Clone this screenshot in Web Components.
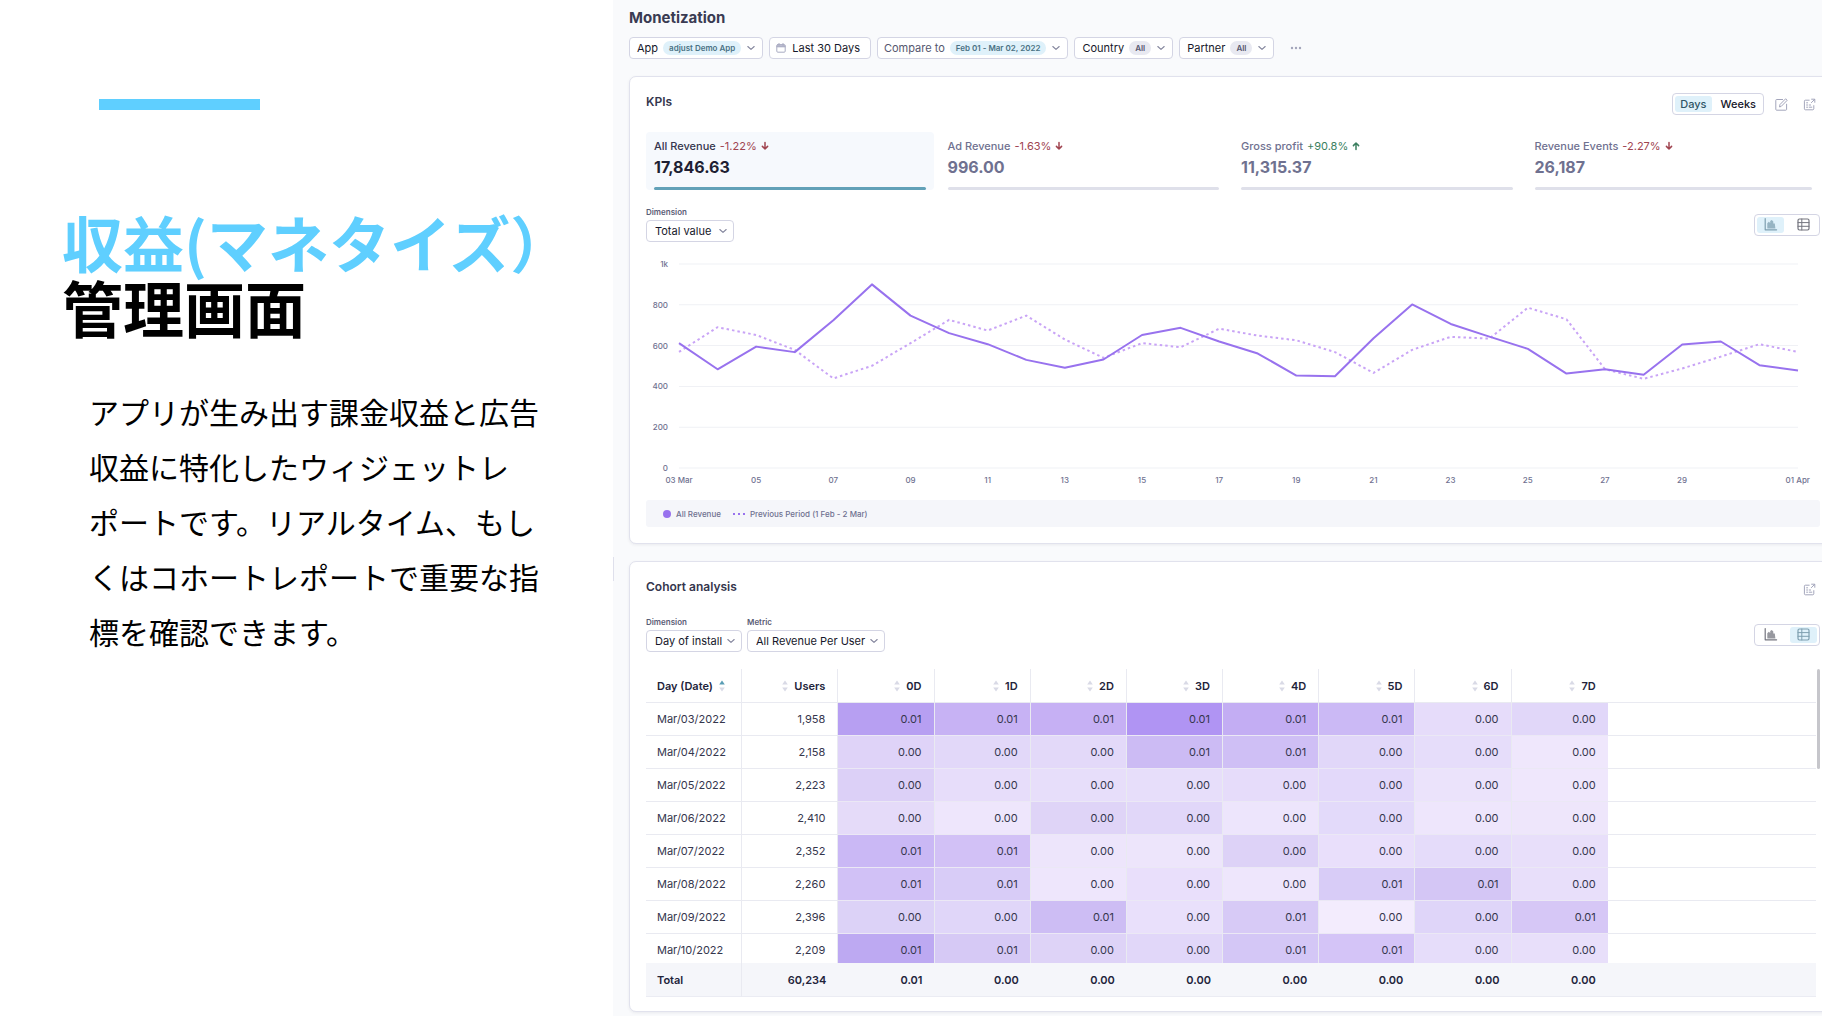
<!DOCTYPE html>
<html lang="ja">
<head>
<meta charset="utf-8">
<title>Monetization</title>
<style>
  body { margin: 0; background: #fff; font-family: Inter, "Noto Sans CJK JP", sans-serif; }
</style>
</head>
<body>
<monetization-page></monetization-page>

<script>
const define = (name, html, setup) => customElements.define(name, class extends HTMLElement {
  constructor() { super(); this.attachShadow({ mode: 'open' }); }
  connectedCallback() {
    this.shadowRoot.innerHTML = '<style>*{box-sizing:border-box}button,select{font:inherit;color:inherit;margin:0}</style>' +
      (typeof html === 'function' ? html(this) : html);
    if (setup) setup(this, this.shadowRoot);
  }
});

/* Icons ------------------------------------------------------------ */
const icons = {
  chevron: ['8', '0 0 8 8', '<path d="M.8 2.5 4 5.4 7.2 2.5" stroke-width="1.1"/>'],
  calendar: ['10', '0 0 10 10', '<rect x=".8" y="1.6" width="8.4" height="7.6" rx="1"/><path d="M1 3.8h8M3 .4v2M7 .4v2" /><path d="M1.2 3h7.6" stroke-width="1.4"/>'],
  edit: ['13', '0 0 13 13', '<path d="M7.6 1.5H1.6a.8.8 0 0 0-.8.8v9.1c0 .5.3.8.8.8h9.2c.4 0 .8-.3.8-.8V6.2"/><path d="M4.6 8.6 5 6.5 10.6.8l1.6 1.5-5.7 5.8z"/>'],
  share: ['13', '0 0 13 13', '<path d="M6.2 2.2H2.4a1 1 0 0 0-1 1v7.6c0 .6.4 1 1 1h7.4c.5 0 1-.4 1-1V7.6"/><path d="M8.6 1.2h3.2v3.1M11.6 1.4 8.4 4.6M3.6 4.8h1M3.6 7h1M3.6 9.2h1M6.2 9.2h2.6M6.2 7h1.4"/>'],
  chart: ['13', '0 0 13 13', '<path d="M1.2 .6v11.2h11.4" stroke-width="1.2"/><path d="M3.3 10.4V5.2l1.5-1.4 1.4 1.2V3l1.6-1 1.5 1.6v2h1.5l.6 4.8z" fill="currentColor" stroke="none" opacity=".75"/>'],
  table: ['13', '0 0 13 13', '<rect x="1" y="1" width="11" height="11" rx="1.4" stroke-width="1.2"/><path d="M4.8 1v11M1 4.6h11M1 8.3h11"/>'],
  down: ['8', '0 0 8 8', '<path d="M4 .6v6M1.4 4.4 4 7l2.6-2.6" stroke-width="1.5"/>'],
  up: ['8', '0 0 8 8', '<path d="M4 7.4v-6M1.4 3.6 4 1l2.6 2.6" stroke-width="1.5"/>'],
  dots: ['12', '0 0 12 12', '<g fill="currentColor" stroke="none"><circle cx="2" cy="6" r="1.2"/><circle cx="6" cy="6" r="1.2"/><circle cx="10" cy="6" r="1.2"/></g>'],
  sort: ['12', '0 0 6 12', '<path d="M3 .4 5.8 4.6H.2z" fill="var(--sort-up,#d9dae6)" stroke="none"/><path d="M3 11.6 5.8 7.4H.2z" fill="#d9dae6" stroke="none"/>']
};
define('ui-icon', el => {
  const [h, box, body] = icons[el.getAttribute('name')];
  return `<style>:host{display:inline-flex;flex:none}svg{display:block;height:${h}px;overflow:visible}</style>
  <svg viewBox="${box}" fill="none" stroke="currentColor" stroke-width="1" stroke-linecap="round" stroke-linejoin="round" aria-hidden="true">${body}</svg>`;
});

/* Introductory text beside the dashboard ---------------------------- */
define('slide-intro', `
<style>
  :host { display: block; padding: 99px 40px 40px 62px; color: #000; font-family: "Noto Sans CJK JP", sans-serif; }
  .rule { width: 161px; height: 11px; margin-left: 37px; background: #5fcfff; }
  h1 { margin: 99px 0 0; font-size: 61px; line-height: 65px; font-weight: 700; white-space: nowrap; }
  h1 span { color: #5fcfff; }
  p { margin: 45px 0 0 27px; font-size: 30px; line-height: 55px; white-space: nowrap; }
</style>
<div class="rule"></div>
<h1><span>収益(マネタイズ）</span><br>管理画面</h1>
<p>アプリが生み出す課金収益と広告<br>収益に特化したウィジェットレ<br>ポートです。リアルタイム、もし<br>くはコホートレポートで重要な指<br>標を確認できます。</p>`);

/* Filter button ------------------------------------------------------ */
define('filter-chip', el => `
<style>
  :host { display: block; }
  button { display: flex; align-items: center; height: 22px; padding: 0 7px; border: 1px solid #d4d5e4; border-radius: 4px;
    background: #fff; color: #16172a; font-size: 11px; line-height: 14px; font-weight: 400; white-space: nowrap; }
  :host([muted]) button { color: #55576f; padding: 0 7px 0 6px; }
  :host([plain]) button { padding: 0 10px 0 6px; }
  .pill { margin: 0 6px 0 5px; padding: 0 6px; border-radius: 7px; background: #dff1fa; color: #4a7184; font-size: 8px; line-height: 14px; font-weight: 600; }
  .pill.all { background: #e8e9f1; color: #55576f; }
  .chev { color: #82849c; }
  .cal { color: #a9abc2; margin-right: 6px; }
</style>
<button type="button">
  ${el.hasAttribute('plain') ? '<ui-icon class="cal" name="calendar"></ui-icon>' : ''}
  <slot></slot>
  ${el.hasAttribute('value') ? `<span class="pill ${el.getAttribute('value') === 'All' ? 'all' : ''}">${el.getAttribute('value')}</span><ui-icon class="chev" name="chevron"></ui-icon>` : ''}
</button>`);

/* Card -------------------------------------------------------------- */
define('dash-card', el => `
<style>
  :host { display: block; }
  section { display: flex; flex-direction: column; gap: 17px; padding: 16px 16px var(--card-bottom, 16px); background: #fff;
    border: 1px solid #e1e2ed; border-radius: 7px; box-shadow: 0 1px 3px #2f305014; }
  header { display: flex; justify-content: space-between; align-items: flex-start; height: 22px; }
  h2 { margin: 0; color: #35364d; font-size: 12px; line-height: 18px; font-weight: 600; }
  .tools { display: flex; align-items: center; gap: 11px; height: 22px; padding-right: 4px; }
</style>
<section><header><h2>${el.getAttribute('heading')}</h2><div class="tools"><slot name="tools"></slot></div></header><slot></slot></section>`);

define('icon-button', el => `
<style>:host{display:block}button{display:flex;padding:0;border:0;background:none;color:#a3a5bb}</style>
<button type="button" aria-label="${el.getAttribute('label')}"><ui-icon name="${el.getAttribute('icon')}"></ui-icon></button>`);

/* Two-way switch ------------------------------------------------------ */
define('view-toggle', el => {
  const on = el.getAttribute('active');
  const item = (key, body, label) => `<button type="button" aria-pressed="${on === key}" ${label ? `aria-label="${label}"` : ''}>${body}</button>`;
  return `
<style>
  :host { display: block; }
  div { display: flex; gap: 4px; height: 22px; padding: 2px; border: 1px solid #d4d5e4; border-radius: 4px; background: #fff; }
  button { display: flex; align-items: center; justify-content: center; padding: 0 5px; border: 0; border-radius: 3px; background: none;
    color: #16172a; font-size: 11px; line-height: 14px; font-weight: 500; }
  :host([icons]) button { width: 27px; padding: 0; color: #74757f; }
  :host([icons]) div { gap: 6px; }
  button[aria-pressed=true] { background: #dff1fa; color: #2f5566; }
  :host([icons]) button[aria-pressed=true] { color: #7e9fb0; }
</style>
<div role="group">${el.hasAttribute('icons')
    ? item('chart', '<ui-icon name="chart"></ui-icon>', 'Chart') + item('table', '<ui-icon name="table"></ui-icon>', 'Table')
    : item('days', 'Days') + item('weeks', 'Weeks')}</div>`;
});

/* KPI tile ------------------------------------------------------------ */
define('kpi-tile', el => {
  const up = el.getAttribute('change').startsWith('+');
  return `
<style>
  :host { display: block; flex: 1; }
  article { display: flex; flex-direction: column; height: 58px; margin-right: 6px; padding: 7px 8px 0; border-radius: 4px; color: #6f7190; }
  :host(:last-child) article { margin-right: 0; }
  .top { display: flex; align-items: center; gap: 4px; font-size: 11px; line-height: 14px; font-weight: 500; }
  .change { display: flex; align-items: center; gap: 4px; color: ${up ? '#3b7f5f' : '#a04450'}; font-weight: 400; }
  strong { margin-top: 5px; font-size: 16px; line-height: 18px; font-weight: 700; }
  .bar { height: 3px; margin-top: auto; border-radius: 2px; background: #dfe0ea; }
  :host([active]) article { background: #f6f9fd; color: #1e1f33; }
  :host([active]) .top { color: #35364d; }
  :host([active]) .bar { background: #62a1b8; }
</style>
<article>
  <div class="top"><span>${el.getAttribute('name')}</span><span class="change">${el.getAttribute('change')}<ui-icon name="${up ? 'up' : 'down'}"></ui-icon></span></div>
  <strong>${el.getAttribute('value')}</strong><div class="bar"></div>
</article>`;
});

/* Labelled drop-down ---------------------------------------------------- */
define('field-select', el => `
<style>
  :host { display: block; }
  label { display: block; margin-bottom: 3px; color: #5b5d76; font-size: 8px; line-height: 10px; font-weight: 600; }
  .box { display: grid; align-items: center; }
  .box > * { grid-area: 1 / 1; }
  select { appearance: none; height: 22px; min-width: 88px; padding: 0 18px 0 8px; border: 1px solid #d4d5e4; border-radius: 4px;
    background: #fff; color: #16172a; font-size: 11px; line-height: 14px; }
  ui-icon { justify-self: end; margin-right: 7px; color: #82849c; pointer-events: none; }
</style>
<label for="s">${el.getAttribute('label')}</label>
<div class="box"><select id="s"><option>${el.getAttribute('value')}</option></select><ui-icon name="chevron"></ui-icon></div>`);

define('control-row', `
<style>:host{display:flex;align-items:center;justify-content:space-between}div{display:flex;gap:5px}</style>
<div><slot></slot></div><slot name="end"></slot>`);

/* Line chart ------------------------------------------------------------ */
const revenue = [612,484,595,568,724,900,747,661,607,530,491,532,652,687,620,561,453,450,636,802,706,644,584,463,484,457,605,620,504,478];
const previous = [569,690,652,579,439,501,612,726,674,747,630,540,612,592,683,649,626,568,466,579,643,634,786,729,484,437,488,546,607,569];
const points = list => list.map((v, i) => `${i},${1000 - v}`).join(' ');
const dayLabel = i => i === 0 ? '03 Mar' : i === 29 ? '01 Apr' : i % 2 || i > 26 ? '' : String(i + 3).padStart(2, '0');
define('line-chart', `
<style>
  :host { display: block; margin-top: 5px; color: #6f7190; font-size: 8px; line-height: 10px; font-weight: 500; }
  .plot { display: grid; grid-template-columns: 22px 1fr; column-gap: 11px; padding-right: 22px; }
  .y { display: flex; flex-direction: column; justify-content: space-between; margin: -5px 0; text-align: right; }
  svg { display: block; width: 100%; height: 204px; overflow: visible; }
  svg * { vector-effect: non-scaling-stroke; fill: none; }
  .grid { stroke: #f0f1f5; stroke-width: 1; }
  .now { stroke: #9872ee; stroke-width: 2; stroke-linejoin: round; }
  .before { stroke: #c9a4f6; stroke-width: 2; stroke-dasharray: 2.5 3; }
  .x { grid-column: 2; display: flex; justify-content: space-between; margin-top: 7px; height: 10px; }
  .x span { display: flex; justify-content: center; width: 0; white-space: nowrap; }
  .legend { display: flex; align-items: center; gap: 12px; height: 27px; margin-top: 15px; padding: 0 17px; border-radius: 3px; background: #f5f6fa; }
  .legend span { display: flex; align-items: center; gap: 5px; }
  .dot { width: 8px; height: 8px; border-radius: 50%; background: #9872ee; }
  .dash { width: 12px; height: 2px; background: repeating-linear-gradient(90deg, #9872ee 0 2px, transparent 2px 5px); }
</style>
<div class="plot">
  <div class="y"><span>1k</span><span>800</span><span>600</span><span>400</span><span>200</span><span>0</span></div>
  <svg viewBox="0 0 29 1000" preserveAspectRatio="none" role="img" aria-label="All Revenue">
    <path class="grid" d="M0 0H29M0 200H29M0 400H29M0 600H29M0 800H29M0 1000H29"/>
    <polyline class="before" points="${points(previous)}"/>
    <polyline class="now" points="${points(revenue)}"/>
  </svg>
  <div class="x">${revenue.map((_, i) => `<span>${dayLabel(i)}</span>`).join('')}</div>
</div>
<div class="legend"><span><i class="dot"></i>All Revenue</span><span><i class="dash"></i>Previous Period (1 Feb - 2 Mar)</span></div>`);

/* Cohort table ------------------------------------------------------------ */
const cohorts = [
  ['Mar/03/2022', '1,958', '11111100', 'b79ff2 c7b2f4 c6b0f4 b094f3 c3adf3 cbb9f5 e6dcfa e1d7f9'],
  ['Mar/04/2022', '2,158', '00011000', 'dfd3f8 e2d8f9 e3d9f9 ccbbf4 cfbff5 e1d7f9 e6ddfa efe7fc'],
  ['Mar/05/2022', '2,223', '00000000', 'dcd0f7 e7ddfa e7defa e7defa e6dcfa e3d9fa ebe3fb efe7fc'],
  ['Mar/06/2022', '2,410', '00000000', 'e5dbf9 eee6fc dfd4f7 e1d7f9 ede5fc e3dafa eee6fc eee6fb'],
  ['Mar/07/2022', '2,352', '11000000', 'cab8f5 d2c1f6 ede5fb ede5fb ddd2f7 e9dffb e5dcfa e8dffa'],
  ['Mar/08/2022', '2,260', '11000110', 'd1c1f6 d8ccf7 eee6fc e9dffb eee6fc d8ccf7 d4c6f5 e8dffa'],
  ['Mar/09/2022', '2,396', '00101001', 'dcd2f7 e0d6f9 cdbdf4 e9e0fb d7caf6 f3ecfd dfd5f9 d6c7f6'],
  ['Mar/10/2022', '2,209', '11001100', 'bda9f2 d6c9f5 ded3f7 e1d7f9 d4c7f6 d4c4f7 e6ddfa e8dffa']
];
define('cohort-table', `
<style>
  :host { display: flex; align-items: flex-start; gap: 1px; height: 328px; }
  .scroll { flex: 1; height: 328px; overflow: hidden; }
  table { width: 100%; table-layout: fixed; border-collapse: separate; border-spacing: 0; color: #35364d; font-size: 11px; line-height: 14px; }
  col { width: 8.22%; } col.rest { width: auto; }
  th, td { height: 33px; padding: 0 12px 0 11px; border-bottom: 1px solid #e9eaf1; text-align: right; font-weight: 400; white-space: nowrap; }
  th:first-child, td:first-child { text-align: left; }
  thead th, tfoot th, tfoot td { font-weight: 600; color: #22233a; }
  thead th { height: 34px; }
  th div { display: flex; align-items: center; justify-content: flex-end; gap: 6px; }
  th:first-child div { justify-content: flex-start; }
  .asc { --sort-up: #5a9db5; }
  thead th:nth-child(-n+9), tbody tr > :nth-child(-n+9), tfoot th { border-right: 1px solid #e9eaf1; }
  tbody td:nth-child(n+3):nth-child(-n+10) { border-bottom-color: #ebe8f5; }
  tfoot th, tfoot td { height: 34px; position: sticky; bottom: 0; background: #f5f6fa; border-bottom-color: #ebecf3; }
  .thumb { width: 3px; height: 100px; margin-right: 0; border-radius: 2px; background: #c6c6cb; }
</style>
<div class="scroll"><table>
  <colgroup>${'<col>'.repeat(10)}<col class="rest"></colgroup>
  <thead><tr><th scope="col"><div>Day (Date)<ui-icon class="asc" name="sort"></ui-icon></div></th>${
    ['Users', '0D', '1D', '2D', '3D', '4D', '5D', '6D', '7D'].map(n => `<th scope="col"><div><ui-icon name="sort"></ui-icon>${n}</div></th>`).join('')}<td></td></tr></thead>
  <tbody>${cohorts.map(([day, users, values, shades]) => {
    const tone = shades.split(' ');
    return `<tr><th scope="row">${day}</th><td>${users}</td>${[...values].map((v, i) => `<td style="background:#${tone[i]}">0.0${v}</td>`).join('')}<td></td></tr>`;
  }).join('')}</tbody>
  <tfoot><tr><th scope="row">Total</th><td>60,234</td><td>0.01</td>${'<td>0.00</td>'.repeat(7)}<td></td></tr></tfoot>
</table></div>
<div class="thumb"></div>`);

/* Dashboard ------------------------------------------------------------ */
define('dash-board', `
<style>
  :host { display: flex; background: #f9fafc; overflow: hidden; }
  .handle { align-self: flex-start; flex: none; width: 1px; height: 24px; margin-top: 557px; background: #dfe0ec; }
  main { flex: 1; min-width: 0; margin-right: -15px; padding: 8px 0 4px 15px; }
  h1 { margin: 0 0 9px; color: #3a3b52; font-size: 15px; line-height: 20px; font-weight: 700; }
  .filters { display: flex; align-items: center; gap: 6px; margin-bottom: 17px; }
  .filters icon-button { margin-left: 10px; }
  .kpis { display: flex; }
  dash-card icon-button + icon-button { margin-left: 4px; }
  dash-card + dash-card { margin-top: 17px; --card-bottom: 14px; }
</style>
<div class="handle"></div>
<main>
  <h1>Monetization</h1>
  <div class="filters">
    <filter-chip value="adjust Demo App">App</filter-chip>
    <filter-chip plain>Last 30 Days</filter-chip>
    <filter-chip muted value="Feb 01 - Mar 02, 2022">Compare to</filter-chip>
    <filter-chip value="All">Country</filter-chip>
    <filter-chip value="All">Partner</filter-chip>
    <icon-button icon="dots" label="More"></icon-button>
  </div>
  <dash-card heading="KPIs">
    <view-toggle slot="tools" active="days"></view-toggle>
    <icon-button slot="tools" icon="edit" label="Edit"></icon-button>
    <icon-button slot="tools" icon="share" label="Open"></icon-button>
    <div class="kpis">
      <kpi-tile active name="All Revenue" change="-1.22%" value="17,846.63"></kpi-tile>
      <kpi-tile name="Ad Revenue" change="-1.63%" value="996.00"></kpi-tile>
      <kpi-tile name="Gross profit" change="+90.8%" value="11,315.37"></kpi-tile>
      <kpi-tile name="Revenue Events" change="-2.27%" value="26,187"></kpi-tile>
    </div>
    <control-row>
      <field-select label="Dimension" value="Total value"></field-select>
      <view-toggle slot="end" icons active="chart"></view-toggle>
    </control-row>
    <line-chart></line-chart>
  </dash-card>
  <dash-card heading="Cohort analysis">
    <icon-button slot="tools" icon="share" label="Open"></icon-button>
    <control-row>
      <field-select label="Dimension" value="Day of install"></field-select>
      <field-select label="Metric" value="All Revenue Per User"></field-select>
      <view-toggle slot="end" icons active="table"></view-toggle>
    </control-row>
    <cohort-table></cohort-table>
  </dash-card>
</main>`);

define('monetization-page', `
<style>:host{display:grid;grid-template-columns:minmax(0,613fr) minmax(0,1209fr);min-height:100vh}</style>
<slide-intro></slide-intro><dash-board></dash-board>`);
</script>
</body>
</html>
